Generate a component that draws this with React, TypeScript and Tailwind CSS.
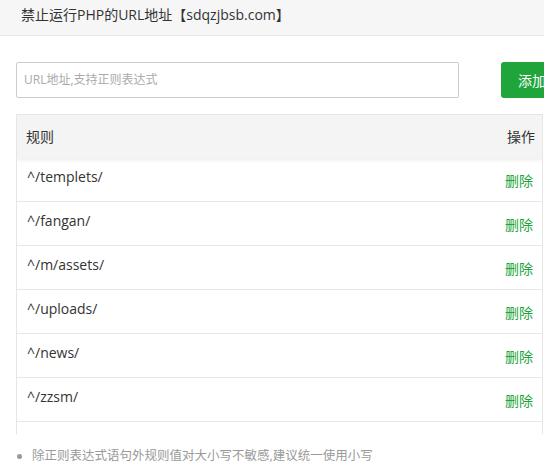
const font = 'font-["Open_Sans","Noto_Sans_CJK_SC",sans-serif]'

const rules = ['^/templets/', '^/fangan/', '^/m/assets/', '^/uploads/', '^/news/', '^/zzsm/', '^/cache/']

export default function App() {
  return (
    <div className={`w-[544px] h-[469px] overflow-hidden bg-white text-[#333] ${font}`}>
      {/* Title bar */}
      <div className="h-[36px] bg-[#f6f6f6] border-b border-[#e6e6e6] pl-[21px] flex items-center">
        <span className="text-[14px] leading-none -mt-[6px] whitespace-nowrap">禁止运行PHP的URL地址【sdqzjbsb.com】</span>
      </div>

      {/* Input + add */}
      <div className="flex items-center pl-[16px] mt-[26px] w-[700px]">
        <div className="w-[443px] h-[36px] border border-[#ccc] rounded-[2px] flex items-center px-[7px] shrink-0">
          <span className="text-[12px] text-[#aaa]">URL地址,支持正则表达式</span>
        </div>
        <div className="ml-[42px] w-[80px] h-[36px] bg-[#20a53a] rounded-[3px] text-white text-[14px] flex items-center pl-[17px] shrink-0">
          添加
        </div>
      </div>

      {/* Table */}
      <div className="ml-[16px] mt-[16px] w-[527px] h-[320px] overflow-hidden border-l border-r border-t border-[#e5e5e5]">
        <div className="h-[43px] bg-[#f4f4f4] flex items-center justify-between pl-[9px] pr-[7px] text-[14px] shadow-[0_2px_4px_rgba(0,0,0,0.08)] relative">
          <span>规则</span>
          <span>操作</span>
        </div>
        {rules.map((r) => (
          <div key={r} className="h-[44px] border-b border-[#e8e8e8] flex justify-between pl-[10px] pr-[9px] text-[14px]">
            <span className="pt-[8px] text-[#333]">{r}</span>
            <span className="pt-[12px] text-[#20a53a]">删除</span>
          </div>
        ))}
      </div>

      {/* Note */}
      <div className="flex items-center pl-[17px] mt-[13px] text-[12.5px] text-[#999] whitespace-nowrap">
        <span className="w-[5px] h-[5px] rounded-full bg-[#999] mr-[10px] shrink-0" />
        <span>除正则表达式语句外规则值对大小写不敏感,建议统一使用小写</span>
      </div>
    </div>
  )
}
